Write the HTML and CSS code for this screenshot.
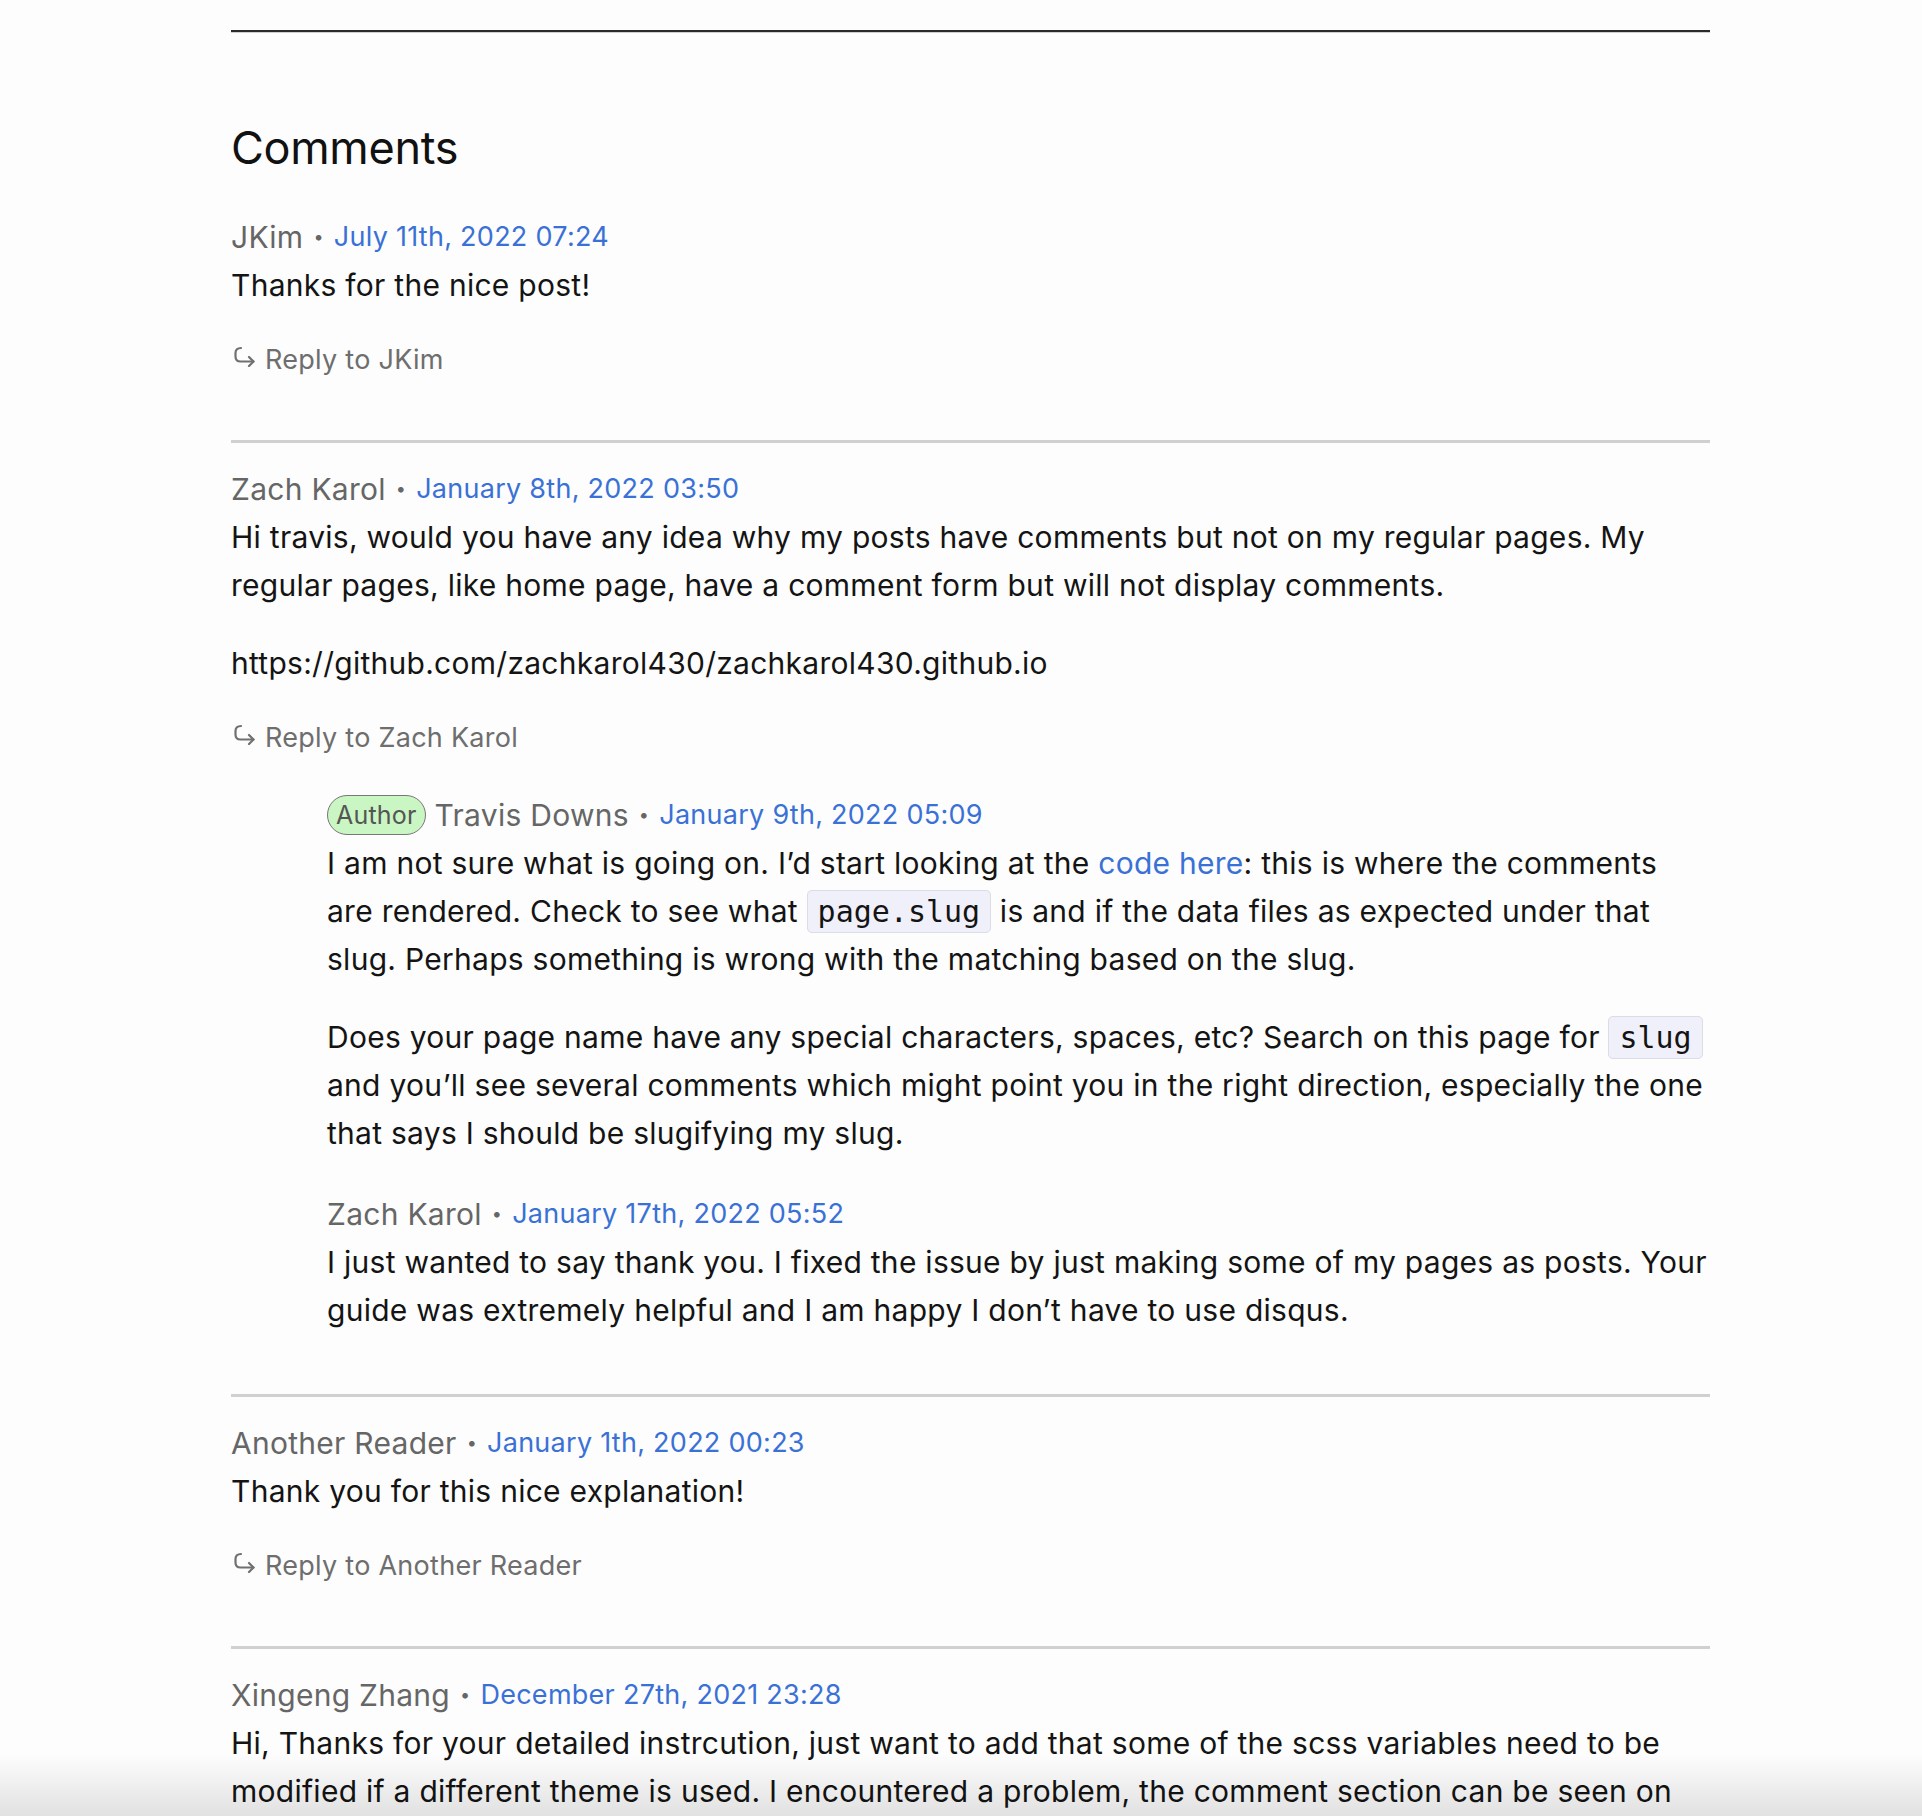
FILE: index.html
```html
<!DOCTYPE html>
<html lang="en">
<head>
<meta charset="utf-8">
<title>Comments</title>
<link rel="stylesheet" href="styles.css">
</head>
<body>
<main class="page">
  <hr class="top-rule">
  <section class="comments">
    <h2 class="comments-title">Comments</h2>

    <article class="thread">
      <div class="comment">
        <div class="meta"><span class="name">JKim</span><span class="sep">•</span><a class="date" href="#c1">July 11th, 2022 07:24</a></div>
        <p>Thanks for the nice post!</p>
        <a class="reply" href="#r1"><svg class="reply-icon" viewBox="0 0 26 22" aria-hidden="true"><path d="M10 3 Q4.5 3 4.5 8 V11.5 Q4.5 16.5 9.5 16.5 H22.5" /><path d="M18 12 L22.5 16.5 L18 21" /></svg>Reply to JKim</a>
      </div>
    </article>

    <hr class="sep-rule">

    <article class="thread">
      <div class="comment">
        <div class="meta"><span class="name">Zach Karol</span><span class="sep">•</span><a class="date" href="#c2">January 8th, 2022 03:50</a></div>
        <p>Hi travis, would you have any idea why my posts have comments but not on my regular pages. My regular pages, like home page, have a comment form but will not display comments.</p>
        <p>https://github.com/zachkarol430/zachkarol430.github.io</p>
        <a class="reply" href="#r2"><svg class="reply-icon" viewBox="0 0 26 22" aria-hidden="true"><path d="M10 3 Q4.5 3 4.5 8 V11.5 Q4.5 16.5 9.5 16.5 H22.5" /><path d="M18 12 L22.5 16.5 L18 21" /></svg>Reply to Zach Karol</a>
      </div>
      <div class="replies">
        <div class="comment nested">
          <div class="meta"><span class="badge">Author</span><span class="name">Travis Downs</span><span class="sep">•</span><a class="date" href="#c3">January 9th, 2022 05:09</a></div>
          <p>I am not sure what is going on. I’d start looking at the <a class="link" href="#code">code here</a>: this is where the comments are rendered. Check to see what <code>page.slug</code> is and if the data files as expected under that slug. Perhaps something is wrong with the matching based on the slug.</p>
          <p>Does your page name have any special characters, spaces, etc? Search on this page for <code>slug</code> and you’ll see several comments which might point you in the right direction, especially the one that says I should be slugifying my slug.</p>
        </div>
        <div class="comment nested">
          <div class="meta"><span class="name">Zach Karol</span><span class="sep">•</span><a class="date" href="#c4">January 17th, 2022 05:52</a></div>
          <p>I just wanted to say thank you. I fixed the issue by just making some of my pages as posts. Your guide was extremely helpful and I am happy I don’t have to use disqus.</p>
        </div>
      </div>
    </article>

    <hr class="sep-rule">

    <article class="thread">
      <div class="comment">
        <div class="meta"><span class="name">Another Reader</span><span class="sep">•</span><a class="date" href="#c5">January 1th, 2022 00:23</a></div>
        <p>Thank you for this nice explanation!</p>
        <a class="reply" href="#r5"><svg class="reply-icon" viewBox="0 0 26 22" aria-hidden="true"><path d="M10 3 Q4.5 3 4.5 8 V11.5 Q4.5 16.5 9.5 16.5 H22.5" /><path d="M18 12 L22.5 16.5 L18 21" /></svg>Reply to Another Reader</a>
      </div>
    </article>

    <hr class="sep-rule">

    <article class="thread">
      <div class="comment">
        <div class="meta"><span class="name">Xingeng Zhang</span><span class="sep">•</span><a class="date" href="#c6">December 27th, 2021 23:28</a></div>
        <p>Hi, Thanks for your detailed instrcution, just want to add that some of the scss variables need to be modified if a different theme is used. I encountered a problem, the comment section can be seen on the post page, but the styles of the comments were not applied correctly.</p>
      </div>
    </article>
  </section>
</main>
<div class="bottom-shade"></div>
</body>
</html>
```

FILE: styles.css
```css
html, body {
  margin: 0;
  padding: 0;
  background: #fdfdfd;
}

body {
  font-family: Inter, "Noto Sans", "Liberation Sans", sans-serif;
  font-size: 30px;
  line-height: 48px;
  letter-spacing: 0.27px;
  color: #141414;
}

.page {
  width: 1479px;
  margin-left: 231px;
  padding-top: 30px;
}

.top-rule {
  margin: 0;
  height: 0;
  border: none;
  border-top: 2px solid #2a2a2a;
  border-bottom: 1px solid #cfcfcf;
}

.comments-title {
  margin: 88px 0 38px;
  font-size: 45px;
  line-height: 54px;
  font-weight: 400;
  color: #111;
  letter-spacing: -0.3px;
}

.thread {
  padding-bottom: 30px;
}

.comment p {
  margin: 0 0 30px;
}

.meta {
  display: flex;
  align-items: center;
  height: 48px;
  white-space: nowrap;
}

.name {
  color: #666;
  font-size: 30px;
}

.sep {
  color: #666;
  font-size: 18px;
  margin: 0 10px;
}

.date {
  color: #3a71d6;
  font-size: 27px;
  text-decoration: none;
}

.badge {
  display: inline-flex;
  align-items: center;
  height: 38px;
  padding: 0 8px;
  margin-right: 9px;
  border: 1.5px solid #777;
  border-radius: 20px;
  background: #c9f6c2;
  color: #555;
  font-size: 25px;
  letter-spacing: 0.2px;
}

.reply {
  display: flex;
  align-items: center;
  height: 41px;
  margin-bottom: 30px;
  color: #6e6e6e;
  font-size: 27px;
  text-decoration: none;
}

.reply-icon {
  width: 26px;
  height: 22px;
  margin: -8px 8px 0 0;
  fill: none;
  stroke: #707070;
  stroke-width: 2.2;
  stroke-linecap: round;
  stroke-linejoin: round;
}

.replies {
  padding-left: 96px;
}

.nested {
  padding-top: 3px;
}

.link {
  color: #3a71d6;
  text-decoration: none;
}

code {
  font-family: "DejaVu Sans Mono", "Liberation Mono", monospace;
  font-size: 30px;
  line-height: 1;
  letter-spacing: 0;
  padding: 3px 10px;
  background: #f0f0fb;
  border: 1px solid #dcdce4;
  border-radius: 5px;
}

.sep-rule {
  margin: 0 0 22px;
  height: 0;
  border: none;
  border-top: 3px solid #d0d0d0;
}

.bottom-shade {
  position: fixed;
  left: 0;
  right: 0;
  bottom: 0;
  height: 62px;
  background: linear-gradient(to bottom, rgba(0,0,0,0), rgba(0,0,0,0.11));
  pointer-events: none;
}
```
